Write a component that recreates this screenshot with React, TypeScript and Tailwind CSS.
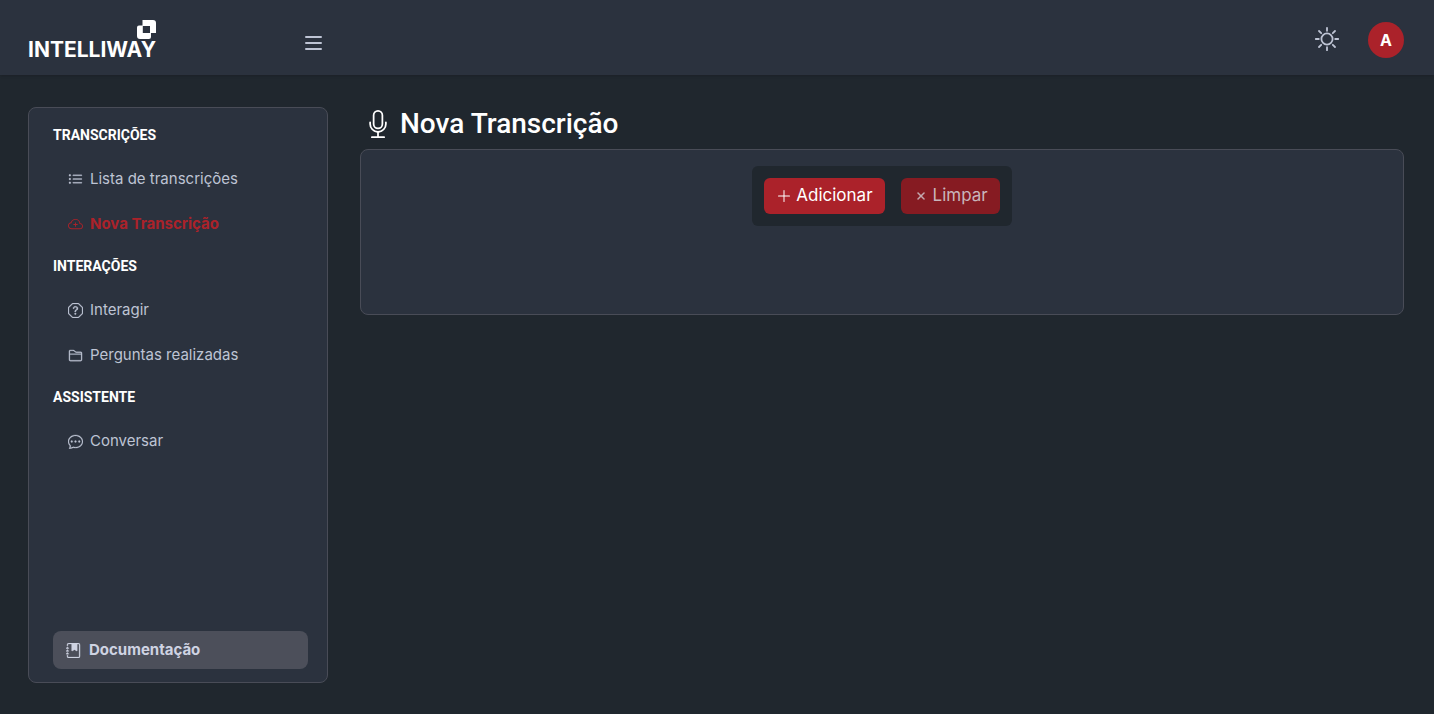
import type { IconType } from "react-icons";
import {
  BsChatDots,
  BsCloudPlus,
  BsFolder2,
  BsJournalBookmarkFill,
  BsListUl,
  BsMic,
  BsPlusLg,
  BsQuestionOctagon,
  BsX,
} from "react-icons/bs";

type MenuItem = { label: string; icon: IconType; active?: boolean };
type MenuGroup = { title: string; items: MenuItem[] };

const menu: MenuGroup[] = [
  {
    title: "TRANSCRIÇÕES",
    items: [
      { label: "Lista de transcrições", icon: BsListUl },
      { label: "Nova Transcrição", icon: BsCloudPlus, active: true },
    ],
  },
  {
    title: "INTERAÇÕES",
    items: [
      { label: "Interagir", icon: BsQuestionOctagon },
      { label: "Perguntas realizadas", icon: BsFolder2 },
    ],
  },
  {
    title: "ASSISTENTE",
    items: [{ label: "Conversar", icon: BsChatDots }],
  },
];

const Logo = () => (
  <a href="#" aria-label="Intelliway" className="flex w-32 flex-col text-white">
    <svg width="19" height="19" viewBox="0 0 19 19" className="self-end">
      <path
        fill="currentColor"
        fillRule="evenodd"
        d="M5.500 0H16a3 3 0 0 1 3 3v10h-5v4a2 2 0 0 1-2 2H3a3 3 0 0 1-3-3V7.500a2 2 0 0 1 2-2h3.500zM5.800 6v7h7.200V6z"
      />
    </svg>
    <span className="text-[21px] leading-[22px] font-bold">INTELLIWAY</span>
  </a>
);

const Header = () => (
  <header className="flex h-[75px] items-center bg-[#2b323e] pr-[30px] pl-7 shadow-sm">
    <div className="flex w-[294px] items-center justify-between pt-[6px]">
      <Logo />
      <button type="button" aria-label="Menu" className="cursor-pointer pt-1 text-[#bec4d4]">
        <svg width="17" height="14" viewBox="0 0 17 14" fill="currentColor" className="block">
          <rect width="17" height="2" rx="1" />
          <rect y="6" width="17" height="2" rx="1" />
          <rect y="12" width="17" height="2" rx="1" />
        </svg>
      </button>
    </div>
    <div className="ml-auto flex items-center gap-7 pt-1">
      <button type="button" aria-label="Tema" className="cursor-pointer pb-[2px] text-[#bec4d4]">
        <svg
          width="26"
          height="26"
          viewBox="0 0 26 26"
          fill="none"
          stroke="currentColor"
          strokeWidth="1.8"
          strokeLinecap="round"
        >
          <circle cx="13" cy="13" r="5.600" />
          <path d="M13 1.800v3M13 21.200v3M1.800 13h3M21.200 13h3M5 5l2.200 2.200M18.800 18.800L21 21M5 21l2.200-2.200M18.800 7.200L21 5" />
        </svg>
      </button>
      <button
        type="button"
        className="size-9 cursor-pointer rounded-full bg-[#ab222a] text-base font-bold text-white"
      >
        A
      </button>
    </div>
  </header>
);

const Sidebar = () => (
  <aside className="flex min-h-[576px] w-[300px] shrink-0 flex-col rounded-lg border border-[#494c57] bg-[#2b323e] pt-[17px] pr-[19px] pb-[13px] pl-6">
    <nav className="flex flex-col">
      {menu.map((group) => (
        <section key={group.title}>
          <h2 className="font-[Roboto,sans-serif] text-sm leading-[21px] font-bold text-white">
            {group.title}
          </h2>
          <ul className="pt-[11px] pb-[9px]">
            {group.items.map(({ label, icon: Icon, active }) => (
              <li key={label}>
                <a
                  href="#"
                  className={`flex h-[45px] items-center gap-[7px] pl-[15px] text-[15px] ${
                    active ? "font-bold text-[#ab222a]" : "text-[#bec4d4]"
                  }`}
                >
                  <Icon size={15} strokeWidth={active ? 0 : 0.3} />
                  {label}
                </a>
              </li>
            ))}
          </ul>
        </section>
      ))}
    </nav>
    <a
      href="#"
      className="mt-auto flex h-[38px] items-center gap-2 rounded-lg bg-[#4c4f5a] px-[13px] text-[15px] font-bold text-[#cfd3e2]"
    >
      <BsJournalBookmarkFill size={15} strokeWidth={0.3} />
      Documentação
    </a>
  </aside>
);

const App = () => {
  return (
    <div className="flex min-h-screen flex-col bg-[#20272e] font-[Inter,sans-serif]">
      <Header />
      <div className="flex grow gap-8 pt-8 pr-[30px] pb-[31px] pl-7">
        <Sidebar />
        <main className="grow">
          <h1 className="flex h-[42px] items-center gap-2 pb-2 pl-1 font-[Roboto,sans-serif] text-[28px] font-medium text-white">
            <BsMic size={28} />
            Nova Transcrição
          </h1>
          <section className="flex h-[166px] items-start justify-center rounded-lg border border-[#494c57] bg-[#2b323e] pt-4">
            <div className="flex gap-4 rounded-md bg-[#20272e] p-3 text-[17px]">
              <button
                type="button"
                className="flex h-9 cursor-pointer items-center gap-1 rounded-md bg-[#ab222a] px-3 text-white"
              >
                <BsPlusLg size={16} />
                Adicionar
              </button>
              <button
                type="button"
                disabled
                className="flex h-9 items-center gap-1 rounded-md bg-[#861b22] px-3 text-[#c9b5bb]"
              >
                <BsX size={16} strokeWidth={0.5} />
                Limpar
              </button>
            </div>
          </section>
        </main>
      </div>
    </div>
  );
};

export default App;
